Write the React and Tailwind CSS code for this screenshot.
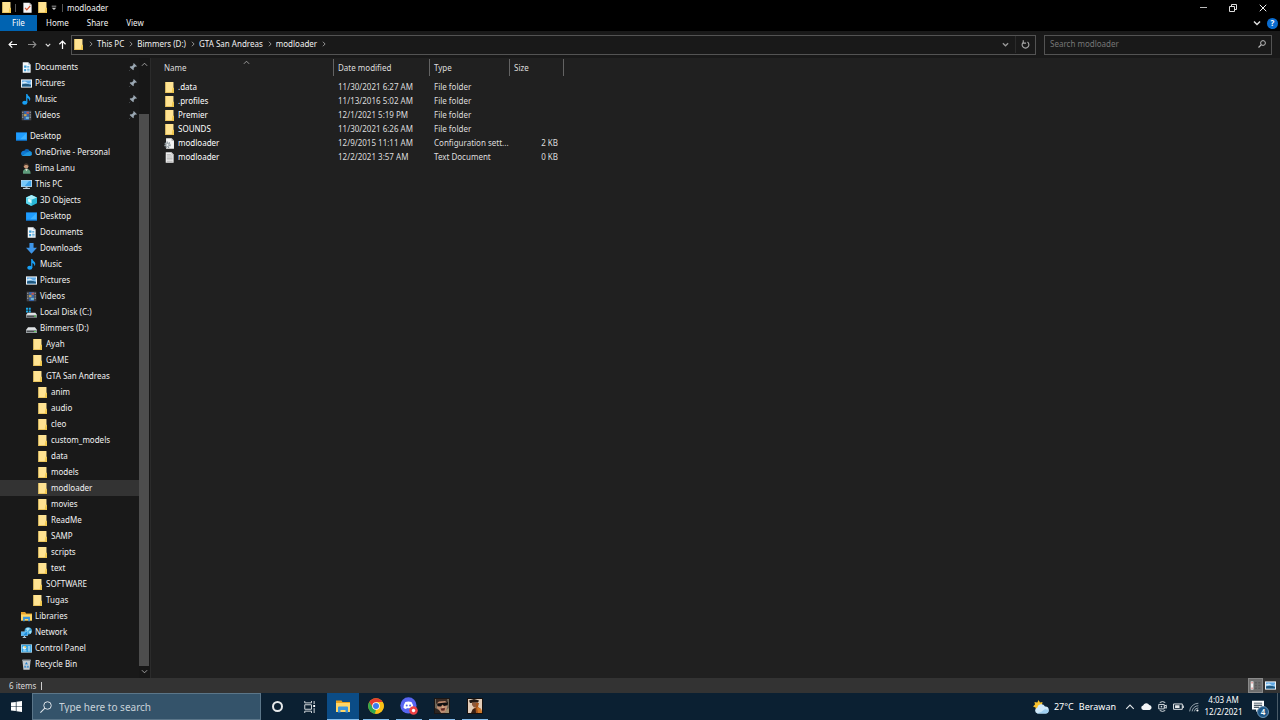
import React from "react";
import clsx from "clsx";

// ─────────────────────────────────────────────
// Icons
// ─────────────────────────────────────────────

function Svg({ className = "size-[11px]", children }) {
  return (
    <svg viewBox="0 0 16 16" className={clsx("shrink-0", className)} aria-hidden="true">
      {children}
    </svg>
  );
}

const ICONS = {
  folder: (
    <>
      <path d="M2 0h11a.8.8 0 0 1 .8.800V16H2z" fill="#ffe392" />
      <path d="M2 0h1v16H2z" fill="#e9c55f" />
      <path d="M12.500 8.500h2V16h-3v-3.500z" fill="#f2c94f" />
      <path d="M2 15h11v1H2z" fill="#e3b94a" />
    </>
  ),
  document: (
    <>
      <path d="M2.500.5h8l3.500 3.500v11.500H2.500z" fill="#f3f7fa" />
      <path d="M10.500.5 14 4h-3.500z" fill="#a9bccb" />
      <path d="M4.500 5h3.500v3.500H4.500zM9 6h3v1.300H9zM4.500 10h3v3.500h-3zM9 10h3.500v1.300H9zM9 12.300h3.500v1.300H9zM9 8h3v1H9z" fill="#3f9fd8" />
    </>
  ),
  pictures: (
    <>
      <path d="M0 2h16v12H0z" fill="#eef2f5" />
      <path d="M1.500 3.500h13v9h-13z" fill="#5fa9e6" />
      <path d="M1.500 6.500q4-2.500 7 0t6-.5v2h-13z" fill="#d6ecf9" />
      <path d="M1.500 9.500q5-2.500 13 .5v2.500h-13z" fill="#20577c" />
    </>
  ),
  music: (
    <>
      <ellipse cx="5.500" cy="12.800" rx="3.700" ry="3" fill="#18a0f5" />
      <path d="M7.500 0h1.800c.2 2.500 4.200 3.500 4.200 7 0 1.500-.7 2.700-1.500 3.500.4-2.600-.6-4-2.700-4.700v7H7.500z" fill="#18a0f5" />
    </>
  ),
  videos: (
    <>
      <path d="M1 1h14v14H1z" fill="#43464c" />
      <path d="M4.500 1.500h7v13h-7z" fill="#3567ad" />
      <path d="M4.500 6h3.500v3H4.500z" fill="#d3a443" />
      <path d="M8 2.500h3.500v3H8z" fill="#c4584a" />
      <path d="M7 10h4.500v3H7z" fill="#77b6cf" />
      <path d="M2 2.500h1.300v2H2zM2 6h1.300v2H2zM2 9.500h1.300v2H2zM12.700 2.500H14v2h-1.300zM12.700 6H14v2h-1.300zM12.700 9.500H14v2h-1.300z" fill="#aeb2b8" />
    </>
  ),
  desktop: (
    <>
      <path d="M0 2h16v12H0z" fill="#1a8ff0" />
      <path d="M.8 2.800h14.400v9.200H.8z" fill="#1f9dff" />
      <path d="M15.200 2.800v9.200H6z" fill="#3fb2ff" />
      <path d="M0 13h16v1H0z" fill="#0a65b5" />
    </>
  ),
  onedrive: (
    <>
      <path d="M4.500 5.800a4.400 4.400 0 0 1 8-.3L9 9 3 11z" fill="#0a63b8" />
      <path d="M4.600 5.700A3.900 3.900 0 0 0 0 9.500c0 1.200.5 2.100 1.200 2.800L10.500 8z" fill="#0f78d4" />
      <path d="M12 5.700a3.900 3.900 0 0 1 4 3.800L13 11 8.500 8.400z" fill="#1490df" />
      <path d="M1.200 12.300c.6.500 1.400.8 2.300.8h9.300c1.600 0 3.200-1.200 3.200-3.300L9 8z" fill="#1f97e0" />
    </>
  ),
  user: (
    <>
      <path d="M3 15.500c-.8-4 .8-6.500 4.500-7 4 0 6.500 2.500 6.500 7z" fill="#5f9c7c" />
      <path d="M6 8.500 8 12l2-3.500z" fill="#e9e4da" />
      <circle cx="7.500" cy="4.800" r="3.300" fill="#c89878" />
      <path d="M4 5C3.500 1.500 5.500.3 7.500.3S11.500 1.500 11 5c-1-1.500-2-2-3.500-2S5 3.500 4 5z" fill="#4c3a2f" />
    </>
  ),
  pc: (
    <>
      <path d="M0 1.500h16v10H0z" fill="#d3e7f5" />
      <path d="M1 2.500h14v8H1z" fill="#3ba0e6" />
      <path d="M1 2.500h11L5 10.500H1z" fill="#77c7f8" />
      <path d="M6.500 11.500h3v1.500h-3z" fill="#9aaebc" />
      <path d="M3 13h10v1.500H3z" fill="#c5d4de" />
    </>
  ),
  objects: (
    <>
      <path d="M0 3.500 8 0l8 3.500v8.500L8 16 0 12z" fill="#28b6d6" />
      <path d="M0 3.500 8 0l8 3.500L8 7z" fill="#a9eefa" />
      <path d="M0 3.500 8 7v9l-8-4z" fill="#5bd7ee" />
      <path d="M3 5 8 7v5L3 9.500z" fill="#d9fbff" />
    </>
  ),
  downloads: <path d="M5 0h6v7h5l-8 8.500L0 7h5z" fill="#3d94e6" />,
  diskC: (
    <>
      <path d="M0 1h3v3H0zM4 1h3v3H4zM0 5h3v3H0zM4 5h3v3H4z" fill="#1ba9e8" />
      <path d="M2.500 8.500h11L16 11.500H0z" fill="#e1e4e6" />
      <path d="M0 11.500h16v4H0z" fill="#a1a6aa" />
      <path d="M1 12.500h14v2H1z" fill="#4a4e51" />
      <path d="M12 12.500h2.500v1.500H12z" fill="#5fe05f" />
    </>
  ),
  disk: (
    <>
      <path d="M3 6h10l3 4H0z" fill="#e1e4e6" />
      <path d="M0 10h16v4.500H0z" fill="#a1a6aa" />
      <path d="M1 11.200h14v2H1z" fill="#4a4e51" />
      <path d="M12 11.500h2.500v1.500H12z" fill="#5fe05f" />
    </>
  ),
  libraries: (
    <>
      <path d="M0 1.500h6l1.500 2H16v10H0z" fill="#e8a52c" />
      <path d="M0 5h16v9H0z" fill="#ffd768" />
      <path d="M3 15V8.500h10V15h-2.500v-3.500h-5V15z" fill="#3a96dd" />
    </>
  ),
  network: (
    <>
      <circle cx="10.500" cy="5.500" r="5.300" fill="#42a7dc" />
      <path d="M7 2.500q3.500-3 6 0L9.500 6zM11 7l4-2q1 3-1.500 5z" fill="#a7e1f7" />
      <path d="M0 6.500h10v6.500H0z" fill="#8ccbf2" />
      <path d="M.8 7.300h8.400v5H.8z" fill="#1f8edb" />
      <path d="M.8 7.300h6.700L3 12.300H.8z" fill="#5db8f2" />
      <path d="M4 13h2v1.500H4zM2.500 14.500h5V16h-5z" fill="#a9c2d2" />
    </>
  ),
  control: (
    <>
      <path d="M0 2h16v12H0z" fill="#b5e2f9" />
      <path d="M1 3h14v10H1z" fill="#2f9fdf" />
      <circle cx="5" cy="7" r="2.800" fill="#d8f1fd" />
      <path d="M5 7V4.200A2.800 2.800 0 0 1 7.800 7z" fill="#f0b429" />
      <path d="M10 5h3.500v1.500H10zM10 8h3.500v1.500H10zM3 11h5v1H3zM10 11h3.500v1H10z" fill="#f2fbff" />
    </>
  ),
  recycle: (
    <>
      <path d="M2 1h12l-1.500 14.500h-9z" fill="#c3cad0" />
      <path d="M2 1h12l-.2 2H2.200z" fill="#8e979e" />
      <path d="m8 4.500 1.800 3-1.200.7L8 7l-.8 1.200-1.200-.8zM4.500 12.500l1-3.200 1.500.8-.5 1h1.200v1.400zM11.500 12.500l-1-3.200-1.500.8.5 1H8.500v1.400z" fill="#1b7fd0" />
    </>
  ),
  config: (
    <>
      <path d="M3 .5h8l3.500 3.500v11.500H3z" fill="#f4f4f4" />
      <path d="M11 .5 14.500 4H11z" fill="#a8a8a8" />
      <circle cx="5" cy="10" r="3.500" fill="none" stroke="#8b949b" strokeWidth="2.500" strokeDasharray="1.700 1.050" />
      <circle cx="5" cy="10" r="2.300" fill="none" stroke="#a9b1b6" strokeWidth="1.800" />
    </>
  ),
  text: (
    <>
      <path d="M2.500.5h8.500l3 3v12H2.500z" fill="#efefef" />
      <path d="M11 .5l3 3h-3z" fill="#a8a8a8" />
      <path d="M4 3h6v1H4zM4 5h8.500v1H4zM4 7h8.500v1H4zM4 9h8.500v1H4zM4 11h8.500v1H4zM4 13h8.500v1H4z" fill="#b4b4b4" />
    </>
  ),
  properties: (
    <>
      <path d="M2 1h9l3 3v11.500H2z" fill="#f5f5f5" />
      <path d="M11 1l3 3h-3z" fill="#9c9c9c" />
      <path d="m4.500 8.500 2.500 3 5-6" fill="none" stroke="#d9532c" strokeWidth="1.800" />
    </>
  ),
};

function Icon({ name, className }) {
  return <Svg className={className}>{ICONS[name]}</Svg>;
}

const CHEVRONS = {
  up: "M2 11l6-6 6 6",
  down: "M2 5l6 6 6-6",
  right: "M5 2l6 6-6 6",
};

function Chevron({ dir, className = "size-[7px] text-[#b0b0b0]", weight = 2 }) {
  return (
    <Svg className={className}>
      <path d={CHEVRONS[dir]} fill="none" stroke="currentColor" strokeWidth={weight} />
    </Svg>
  );
}

function Pin() {
  return (
    <Svg className="size-2">
      <path d="M9.500 0 16 6.500l-2 1-1.500-.3-3 3 .2 3-1.500 1.500-3.500-3.500L.5 16 0 15.500l4.800-4.200L1.300 7.800l1.500-1.500 3 .2 3-3L8.500 2z" fill="#9aa7b2" />
    </Svg>
  );
}

// ─────────────────────────────────────────────
// Data
// ─────────────────────────────────────────────

const QUICK_ACCESS = [
  ["document", "Documents"],
  ["pictures", "Pictures"],
  ["music", "Music"],
  ["videos", "Videos"],
];

const INDENT = ["pl-4", "pl-[21px]", "pl-[26px]", "pl-8", "pl-[37px]"];

const TREE = [
  [0, "desktop", "Desktop"],
  [1, "onedrive", "OneDrive - Personal"],
  [1, "user", "Bima Lanu"],
  [1, "pc", "This PC"],
  [2, "objects", "3D Objects"],
  [2, "desktop", "Desktop"],
  [2, "document", "Documents"],
  [2, "downloads", "Downloads"],
  [2, "music", "Music"],
  [2, "pictures", "Pictures"],
  [2, "videos", "Videos"],
  [2, "diskC", "Local Disk (C:)"],
  [2, "disk", "Bimmers (D:)"],
  [3, "folder", "Ayah"],
  [3, "folder", "GAME"],
  [3, "folder", "GTA San Andreas"],
  [4, "folder", "anim"],
  [4, "folder", "audio"],
  [4, "folder", "cleo"],
  [4, "folder", "custom_models"],
  [4, "folder", "data"],
  [4, "folder", "models"],
  [4, "folder", "modloader"],
  [4, "folder", "movies"],
  [4, "folder", "ReadMe"],
  [4, "folder", "SAMP"],
  [4, "folder", "scripts"],
  [4, "folder", "text"],
  [3, "folder", "SOFTWARE"],
  [3, "folder", "Tugas"],
  [1, "libraries", "Libraries"],
  [1, "network", "Network"],
  [1, "control", "Control Panel"],
  [1, "recycle", "Recycle Bin"],
];

const FILES = [
  { icon: "folder", name: ".data", date: "11/30/2021 6:27 AM", type: "File folder", size: "" },
  { icon: "folder", name: ".profiles", date: "11/13/2016 5:02 AM", type: "File folder", size: "" },
  { icon: "folder", name: "Premier", date: "12/1/2021 5:19 PM", type: "File folder", size: "" },
  { icon: "folder", name: "SOUNDS", date: "11/30/2021 6:26 AM", type: "File folder", size: "" },
  { icon: "config", name: "modloader", date: "12/9/2015 11:11 AM", type: "Configuration sett...", size: "2 KB" },
  { icon: "text", name: "modloader", date: "12/2/2021 3:57 AM", type: "Text Document", size: "0 KB" },
];

const COLUMNS = [
  { label: "Name", width: "w-[183px]", pad: "pl-[13px]" },
  { label: "Date modified", width: "w-24", pad: "pl-1" },
  { label: "Type", width: "w-20", pad: "pl-1" },
  { label: "Size", width: "w-[54px]", pad: "pl-1" },
];

// ─────────────────────────────────────────────
// Window chrome
// ─────────────────────────────────────────────

function TitleBar() {
  return (
    <header className="flex h-[15px] items-center bg-black pl-px">
      <Icon name="folder" />
      <span className="ml-[3px] h-2 w-px bg-[#555]" />
      <button aria-label="Properties" className="ml-[6px]">
        <Icon name="properties" />
      </button>
      <button aria-label="New folder" className="ml-1">
        <Icon name="folder" />
      </button>
      <button aria-label="Customize toolbar" className="ml-[3px]">
        <Svg className="size-[6px]">
          <path d="M2 2h12v2H2zM2 7h12l-6 6z" fill="#ccc" />
        </Svg>
      </button>
      <span className="ml-[5px] h-2 w-px bg-[#555]" />
      <h1 className="ml-1 flex-1">modloader</h1>
      <div className="flex pr-[2px]">
        <button aria-label="Minimize" className="flex h-[15px] w-[30px] items-center justify-center">
          <span className="h-px w-[7px] bg-[#bbb]" />
        </button>
        <button aria-label="Restore" className="flex h-[15px] w-[30px] items-center justify-center">
          <Svg className="size-2">
            <path d="M1 5h10v10H1zM5 5V1h10v10h-4" fill="none" stroke="#ddd" strokeWidth="2" />
          </Svg>
        </button>
        <button aria-label="Close" className="flex h-[15px] w-[30px] items-center justify-center">
          <Svg className="size-2">
            <path d="M1.500 1.500l13 13M14.500 1.500l-13 13" fill="none" stroke="#eee" strokeWidth="2" />
          </Svg>
        </button>
      </div>
    </header>
  );
}

function Ribbon() {
  return (
    <div className="flex h-4 items-stretch bg-black">
      <button className="w-[37px] bg-[#0063b1] text-white">File</button>
      <button className="px-[9px]">Home</button>
      <button className="px-[9px]">Share</button>
      <button className="px-[9px]">View</button>
      <div className="ml-auto flex items-center gap-[6px] pr-[2px]">
        <button aria-label="Expand the ribbon">
          <Chevron dir="down" className="size-[8px] text-[#ddd]" weight={3} />
        </button>
        <button
          aria-label="Help"
          className="flex size-[11px] items-center justify-center rounded-full bg-[#0a6cd0] font-bold text-white"
        >
          ?
        </button>
      </div>
    </div>
  );
}

function AddressBar() {
  const crumbs = ["This PC", "Bimmers (D:)", "GTA San Andreas", "modloader"];

  return (
    <div className="flex h-[27px] items-center bg-[#191919] pr-2">
      <div className="flex w-[71px] shrink-0 items-center pl-[3px]">
        <button aria-label="Back" className="flex w-[19px] justify-center">
          <Svg className="size-[9px]">
            <path d="M16 8H2M7.500 2.500 2 8l5.500 5.500" fill="none" stroke="#fff" strokeWidth="2.200" />
          </Svg>
        </button>
        <button aria-label="Forward" className="flex w-5 justify-center">
          <Svg className="size-[9px]">
            <path d="M0 8h14M8.500 2.500 14 8l-5.500 5.500" fill="none" stroke="#8c8c8c" strokeWidth="2" />
          </Svg>
        </button>
        <button aria-label="Recent locations" className="flex w-3 justify-center">
          <Chevron dir="down" className="size-[6px] text-[#ddd]" weight={3} />
        </button>
        <button aria-label="Up" className="flex w-4 justify-center">
          <Svg className="size-[9px]">
            <path d="M8 16V2M2.500 7.500 8 2l5.500 5.500" fill="none" stroke="#fff" strokeWidth="2.200" />
          </Svg>
        </button>
      </div>

      <nav aria-label="Address" className="flex h-5 flex-1 items-center border border-[#535353] pb-px pl-px">
        <Icon name="folder" />
        <Chevron dir="right" className="mr-[3px] ml-1 size-[6px] text-[#bbb]" />
        {crumbs.map((crumb) => (
          <React.Fragment key={crumb}>
            <button className="whitespace-nowrap">{crumb}</button>
            <Chevron dir="right" className="mr-[3px] ml-1 size-[6px] text-[#bbb]" />
          </React.Fragment>
        ))}
        <button aria-label="Previous locations" className="ml-auto flex w-[19px] justify-center">
          <Chevron dir="down" className="size-[7px] text-[#999]" weight={3} />
        </button>
        <button aria-label="Refresh" className="flex h-full w-5 items-center justify-center border-l border-[#2b2b2b]">
          <Svg className="size-[9px]">
            <path d="M4.500 3.500a6 6 0 1 0 7 0M4 .5v5h5" fill="none" stroke="#aaa" strokeWidth="2" />
          </Svg>
        </button>
      </nav>

      <label className="ml-2 flex h-5 w-57 items-center border border-[#535353] px-[5px] pb-px">
        <input
          type="search"
          aria-label="Search modloader"
          placeholder="Search modloader"
          className="min-w-0 flex-1 bg-transparent outline-none placeholder:text-[#777]"
        />
        <Svg className="size-2">
          <circle cx="10" cy="6" r="4.800" fill="none" stroke="#bbb" strokeWidth="2" />
          <path d="M6.500 9.500 1 15" stroke="#bbb" strokeWidth="2.200" />
        </Svg>
      </label>
    </div>
  );
}

// ─────────────────────────────────────────────
// Navigation pane
// ─────────────────────────────────────────────

function NavItem({ level, icon, label, pinned, active }) {
  return (
    <li>
      <button
        className={clsx(
          "flex h-4 w-full items-center gap-[3px] pr-[2px] text-left whitespace-nowrap",
          INDENT[level],
          active && "bg-[#333]"
        )}
      >
        <Icon name={icon} />
        <span className="flex-1">{label}</span>
        {pinned && <Pin />}
      </button>
    </li>
  );
}

function NavPane() {
  return (
    <aside className="flex w-[151px] shrink-0 border-r border-[#2b2b2b] bg-[#191919]">
      <nav className="flex-1 overflow-hidden pt-px">
        <ul>
          {QUICK_ACCESS.map(([icon, label]) => (
            <NavItem key={label} level={1} icon={icon} label={label} pinned />
          ))}
        </ul>
        <ul className="mt-[5px]">
          {TREE.map(([level, icon, label]) => (
            <NavItem
              key={`${level}-${label}`}
              level={level}
              icon={icon}
              label={label}
              active={label === "modloader"}
            />
          ))}
        </ul>
      </nav>
      <div className="flex w-[11px] flex-col bg-[#171717] pb-px">
        <button aria-label="Scroll up" className="flex h-[13px] items-center justify-center">
          <Chevron dir="up" />
        </button>
        <div className="mt-[43px] mr-px flex-1 bg-[#4d4d4d]" />
        <button aria-label="Scroll down" className="flex h-[11px] items-center justify-center">
          <Chevron dir="down" />
        </button>
      </div>
    </aside>
  );
}

// ─────────────────────────────────────────────
// File list
// ─────────────────────────────────────────────

function FileList() {
  return (
    <main className="flex-1 bg-[#202020] pt-px">
      <table className="w-[413px] table-fixed border-collapse">
        <thead>
          <tr>
            {COLUMNS.map((col) => (
              <th key={col.label} className={clsx("p-0 pb-1 text-left font-normal text-[#dedede]", col.width)}>
                <button
                  className={clsx(
                    "relative flex h-[17px] w-full items-center border-r border-[#636363]",
                    col.pad
                  )}
                >
                  {col.label}
                  {col.label === "Name" && (
                    <Chevron dir="up" className="absolute top-0 left-[92px] size-[7px] text-[#aaa]" />
                  )}
                </button>
              </th>
            ))}
          </tr>
        </thead>
        <tbody>
          {FILES.map((file) => (
            <tr key={file.icon + file.name} className="h-[14px] whitespace-nowrap text-[#dedede]">
              <td className="p-0 pl-[13px]">
                <span className="flex items-center gap-[3px] text-white">
                  <Icon name={file.icon} />
                  {file.name}
                </span>
              </td>
              <td className="p-0 pl-1">{file.date}</td>
              <td className="p-0 pl-1">{file.type}</td>
              <td className="p-0 pr-[6px] text-right">{file.size}</td>
            </tr>
          ))}
        </tbody>
      </table>
    </main>
  );
}

function StatusBar() {
  return (
    <footer className="flex h-[15px] items-center bg-[#333] pr-1 pl-[9px] text-[#d8d8d8]">
      <span>6 items</span>
      <span className="ml-[5px] h-2 w-px bg-[#ccc]" />
      <button
        aria-label="Details view"
        className="ml-auto flex h-[15px] w-[15px] items-center justify-center border border-[#8a8a8a] bg-[#6e6e6e]"
      >
        <Svg>
          <path d="M1 2h4v12H1z" fill="#f2f2f2" />
          <path d="M2 3h2v2H2zM2 11h2v2H2z" fill="#d88" />
          <path d="M7 3h3v2H7zM12 3h3v2h-3zM7 7h3v2H7zM12 7h3v2h-3zM7 11h3v2H7zM12 11h3v2h-3z" fill="#5a5a5a" />
        </Svg>
      </button>
      <button aria-label="Large icons view" className="ml-[2px]">
        <Icon name="pictures" />
      </button>
    </footer>
  );
}

// ─────────────────────────────────────────────
// Taskbar
// ─────────────────────────────────────────────

function ChromeLogo() {
  return (
    <Svg className="size-4">
      <circle cx="8" cy="8" r="7.800" fill="#fbc116" />
      <path d="M1.250 4.100A7.800 7.800 0 0 1 14.750 4.100L8 4.400 4.600 9.400z" fill="#e33b2e" />
      <path d="M1.250 4.100 4.880 9.800 8 11.600l-1 4.100A7.800 7.800 0 0 1 1.250 4.100z" fill="#2da94f" />
      <path d="M8 4.100h6.750A7.800 7.800 0 0 1 7 15.740L11.200 9.800z" fill="#fbc116" />
      <circle cx="8" cy="8" r="3.800" fill="#fff" />
      <circle cx="8" cy="8" r="3" fill="#3b7ded" />
    </Svg>
  );
}

function DiscordLogo() {
  return (
    <Svg className="size-[18px]">
      <circle cx="7.500" cy="7.500" r="7.200" fill="#5865f2" />
      <path d="M4.800 4.500q2.700-1 5.400 0 1.600 2.400 1.700 5-1.300 1-2.400 1.200l-.6-1q-1.400.4-2.800 0l-.6 1q-1.200-.2-2.400-1.200.1-2.700 1.700-5z" fill="#fff" />
      <circle cx="6" cy="7.600" r=".9" fill="#5865f2" />
      <circle cx="9" cy="7.600" r=".9" fill="#5865f2" />
      <circle cx="12" cy="12" r="3.800" fill="#ed4245" />
      <circle cx="12" cy="12" r="1.500" fill="#fff" />
    </Svg>
  );
}

// Portrait with sunglasses
function SampIcon() {
  return (
    <Svg className="size-4">
      <path d="M0 0h16v16H0z" fill="#1c1715" />
      <path d="M1 1h14v14H1z" fill="#6f685b" />
      <path d="M3 2q5-2 9.500 1l1 5-2 6.500L7 15l-4-5z" fill="#c08e72" />
      <path d="M2 1h11l1 4-3-2-6 .5L2 6z" fill="#3b2b24" />
      <path d="m3 5.500 11-1.300-.3 3-3.700.8-1.500-1.500L7 8.500l-3.500-.3z" fill="#0f0e10" />
      <path d="M6.500 10.500 11 10l-.5 2.500-3 .3z" fill="#5e2720" />
      <path d="M8 8.500h1.500l.5 1.300H8z" fill="#e0b292" />
      <path d="M1 10l4 2 2 3H1z" fill="#2d2622" />
      <path d="M12 12l3-2v5h-4z" fill="#a08e6f" />
    </Svg>
  );
}

// Figure in a hat, orange jacket
function GtaIcon() {
  return (
    <Svg className="size-4">
      <path d="M0 0h16v16H0z" fill="#17110e" />
      <path d="M1 1h14v14H1z" fill="#e2cdb9" />
      <path d="M2 2.500 7 1l5 1.500-1 2-8 .5z" fill="#211813" />
      <path d="M5 4.500h5.500l-.5 4L7 9.500 5 7z" fill="#8d5a3b" />
      <path d="M9 5h3l-1 4 3 2 1 4H5l1-4 3-2z" fill="#a5541c" />
      <path d="M10 9l4 2 1 4h-4z" fill="#d17a2a" />
      <path d="M5.500 11.500 8.500 10l.5 5H4z" fill="#3a2014" />
    </Svg>
  );
}

function TaskButton({ label, running, active, children }) {
  return (
    <button
      aria-label={label}
      className={clsx("flex w-8 flex-col items-center", active && "bg-[#0b4c86]")}
    >
      <span className="flex flex-1 items-center justify-center">{children}</span>
      {running && <span className={clsx("h-px bg-[#84bdec]", active ? "w-full" : "w-[26px]")} />}
    </button>
  );
}

function TrayButton({ label, children }) {
  return (
    <button aria-label={label} className="flex w-4 items-center justify-center">
      {children}
    </button>
  );
}

function Taskbar() {
  return (
    <div className="flex h-[27px] items-stretch bg-[#0b2032] text-white">
      <button aria-label="Start" className="flex w-8 items-center justify-center">
        <Svg>
          <path d="M0 2.300 7 1.300v6.200H0zM8 1.200 16 0v7.500H8zM0 8.500h7v6.200l-7-1zM8 8.500h8V16l-8-1.200z" fill="#fff" />
        </Svg>
      </button>
      <label className="flex w-[229px] items-center gap-[7px] border border-[#5b7689] bg-[#34536a] px-[7px] text-[10px]">
        <Svg className="size-3">
          <circle cx="10" cy="6" r="5" fill="none" stroke="#e0e6ea" strokeWidth="1.300" />
          <path d="M6.500 9.500.5 15.500" stroke="#e0e6ea" strokeWidth="1.400" />
        </Svg>
        <input
          type="text"
          aria-label="Type here to search"
          placeholder="Type here to search"
          className="min-w-0 flex-1 bg-transparent outline-none placeholder:text-[#c8d2d9]"
        />
      </label>

      <div className="flex gap-px">
        <TaskButton label="Cortana">
          <span className="size-[11px] rounded-full border-2 border-[#e6e9eb]" />
        </TaskButton>
        <TaskButton label="Task View">
          <Svg className="size-3">
            <path d="M1 0v2.500h9V0M1 16v-2.500h9V16M1 5h9v6H1zM13.500 0v4M13.500 9.500V16" fill="none" stroke="#d5dade" strokeWidth="1.300" />
            <path d="M12.300 5.300h2.500v2.700h-2.500z" fill="#fff" />
          </Svg>
        </TaskButton>
        <TaskButton label="File Explorer" running active>
          <Svg className="size-4">
            <path d="M1 2.500h5.500l1 1.500H15v3H1z" fill="#e9a21f" />
            <path d="M1 5h14v9H1z" fill="#ffd767" />
            <path d="M3 14.500V9.500q0-1 1-1h8q1 0 1 1v5h-2.500v-2.500h-5v2.500z" fill="#3a95dd" />
          </Svg>
        </TaskButton>
        <TaskButton label="Google Chrome" running>
          <ChromeLogo />
        </TaskButton>
        <TaskButton label="Discord" running>
          <DiscordLogo />
        </TaskButton>
        <TaskButton label="SA-MP" running>
          <SampIcon />
        </TaskButton>
        <TaskButton label="GTA San Andreas" running>
          <GtaIcon />
        </TaskButton>
      </div>

      <button className="ml-auto flex items-center gap-[5px] pr-[6px] text-[9px] whitespace-nowrap">
        <Svg className="size-4">
          <path d="M5.500 1 7 3.500 9.500 3 9 5.500 6 11 3 10.500l-.5-2L0 7.500l2-2L1.500 3l2.800.5z" fill="#f8c22d" />
          <path d="M4.500 14.500a3 3 0 0 1-.3-5.800A4.200 4.200 0 0 1 12 7.500a3.500 3.500 0 0 1 .5 7z" fill="#cfe9fa" />
          <path d="M4 14.300q4-.3 8-4.300 2 1 3.500.5a3.500 3.500 0 0 1-3 4h-8z" fill="#9fd0f1" />
        </Svg>
        <span>27°C</span>
        <span>Berawan</span>
      </button>

      <div className="flex">
        <TrayButton label="Show hidden icons">
          <Chevron dir="up" className="size-[10px] text-[#e3e7ea]" weight={1.8} />
        </TrayButton>
        <TrayButton label="OneDrive">
          <Svg>
            <path d="M3.300 13a3.300 3.300 0 0 1-.3-6.500 5 5 0 0 1 9-.8A3.700 3.700 0 0 1 12.500 13z" fill="#f3f5f6" />
          </Svg>
        </TrayButton>
        <TrayButton label="Meet Now">
          <Svg>
            <path d="M2.500 5h8v6.500h-8zM10.500 7.500l3-1.500v4.500l-3-1.500M4 2.200Q8-.5 12 2.200M4 13.800q4 2.700 8 0" fill="none" stroke="#dbe0e4" strokeWidth="1.400" />
            <circle cx="6.500" cy="8.200" r="1.200" fill="#dbe0e4" />
          </Svg>
        </TrayButton>
        <TrayButton label="Battery">
          <Svg>
            <path d="M.8 4.300h12.700v7.800H.8z" fill="none" stroke="#e6e9eb" strokeWidth="1.400" />
            <path d="M3 6.300h6.500v3.800H3zM14 6.500h1.700V10H14z" fill="#e6e9eb" />
          </Svg>
        </TrayButton>
        <TrayButton label="Wi-Fi">
          <Svg className="size-[10px]">
            <path d="M1 15A14 14 0 0 1 15 2M5 15A10 10 0 0 1 15 6M8.500 15A6.500 6.500 0 0 1 15 9.500" fill="none" stroke="#a8b3bc" strokeWidth="1.400" />
            <circle cx="13.500" cy="13.500" r="1.700" fill="#fff" />
          </Svg>
        </TrayButton>
      </div>
      <button className="flex w-[43px] flex-col items-center justify-center pb-[2px] whitespace-nowrap">
        <time>4:03 AM</time>
        <time>12/2/2021</time>
      </button>
      <button aria-label="4 new notifications" className="relative flex w-8 items-center justify-center">
        <Svg className="mr-[6px] mb-[2px] size-3">
          <path d="M0 1h16v11.500H9L5.500 16v-3.500H0z" fill="#fff" />
          <path d="M2.500 3.500h11v1.300h-11zM2.500 6.200h11v1.300h-11zM2.500 9h7v1.200h-7z" fill="#15293a" />
        </Svg>
        <span className="absolute right-[8px] bottom-[2px] flex size-3 items-center justify-center rounded-full border border-[#6c93b3] bg-[#1d5686] font-semibold">
          4
        </span>
      </button>
      <button aria-label="Show desktop" className="w-[3px] border-l border-[#4a5b68]" />
    </div>
  );
}

export default function App() {
  return (
    <div className="flex min-h-screen flex-col bg-[#202020] font-['Noto_Sans','Open_Sans',sans-serif] text-[8px] leading-[12px] text-[#f2f2f2]">
      <TitleBar />
      <Ribbon />
      <AddressBar />
      <div className="flex flex-1">
        <NavPane />
        <FileList />
      </div>
      <StatusBar />
      <Taskbar />
    </div>
  );
}
